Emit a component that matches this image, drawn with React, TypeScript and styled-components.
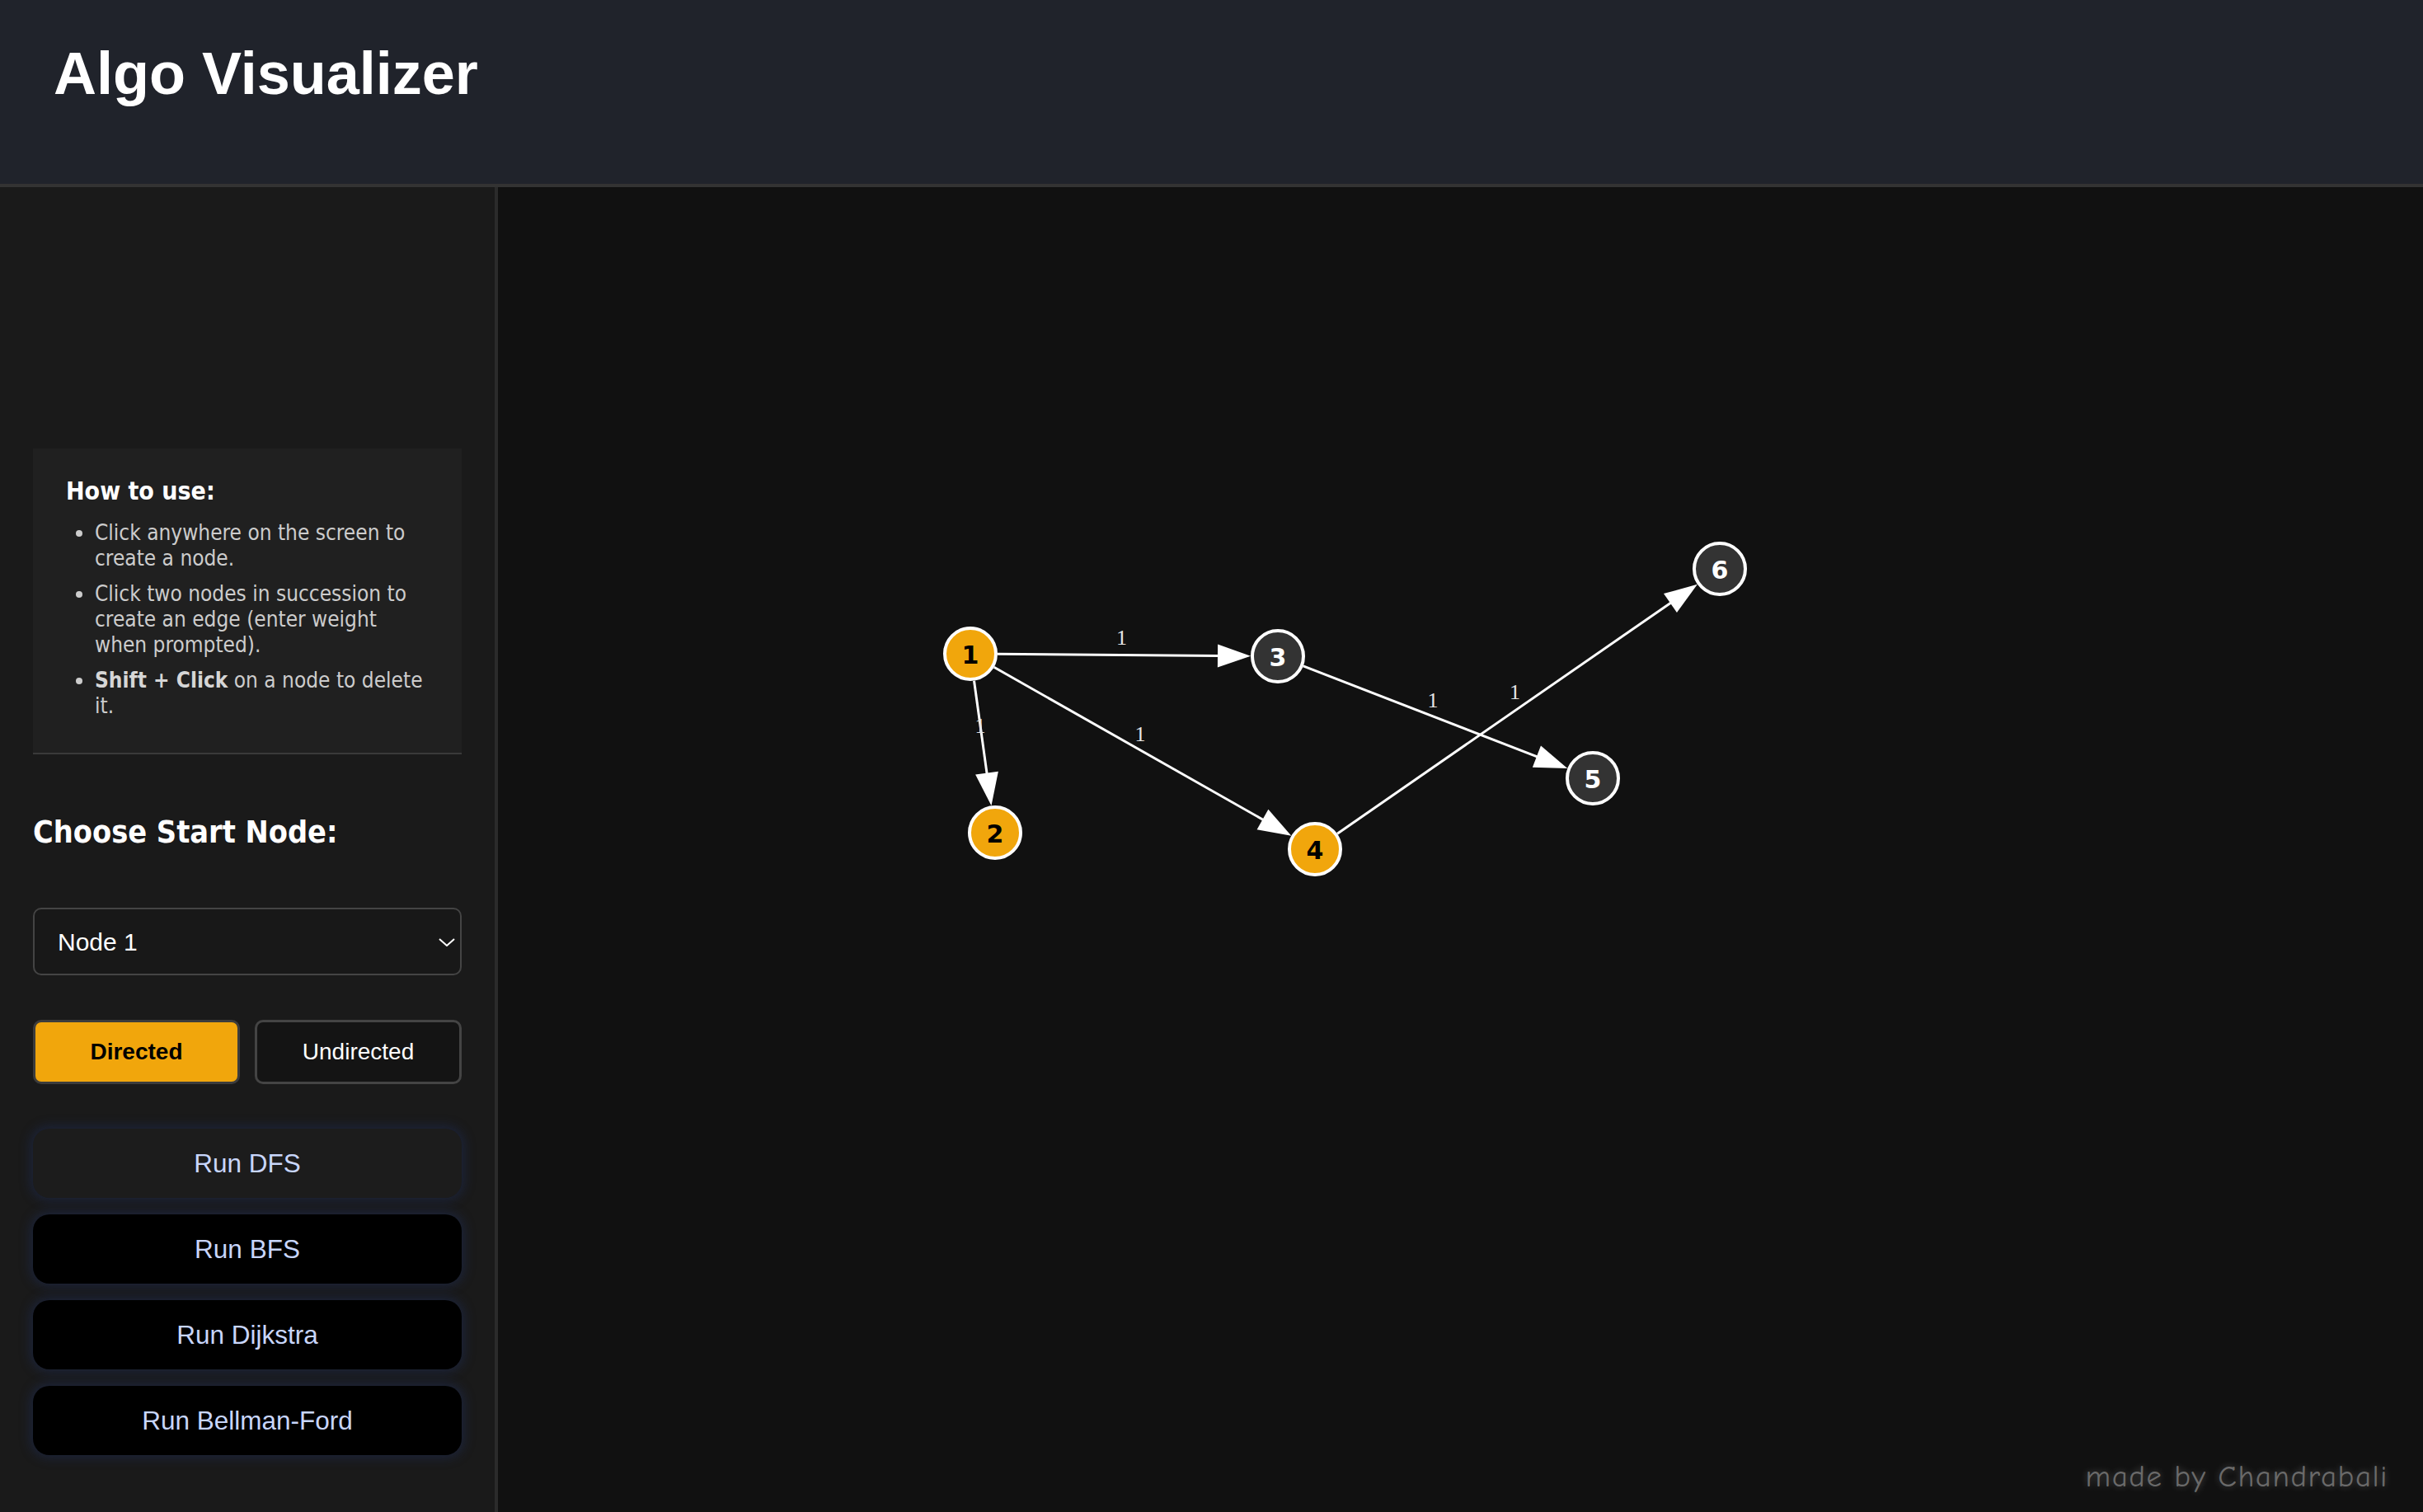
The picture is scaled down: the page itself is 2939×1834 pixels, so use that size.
import React from 'react'
import styled, { createGlobalStyle } from 'styled-components'

const GlobalStyle = createGlobalStyle`
  html, body, #root { margin: 0; padding: 0; height: 100%; }
  body { background: #111111; font-family: 'Liberation Sans', Arial, sans-serif; }
  * { box-sizing: border-box; }
`

const Page = styled.div`
  height: 100vh;
  display: flex;
  flex-direction: column;
  overflow: hidden;
`

const Header = styled.header`
  height: 227px;
  flex-shrink: 0;
  background: #20232b;
  border-bottom: 4px solid #333333;
  padding: 48px 65px 0;
`

const Title = styled.h1`
  margin: 0;
  font-family: 'Liberation Sans', Arial, sans-serif;
  font-size: 72px;
  font-weight: 700;
  color: #ffffff;
`

const Body = styled.div`
  flex: 1;
  display: flex;
  min-height: 0;
`

const Sidebar = styled.aside`
  width: 604px;
  flex-shrink: 0;
  background: #1a1a1a;
  border-right: 4px solid #2b2b2b;
  padding: 317px 40px 0;
  display: flex;
  flex-direction: column;
  font-family: Tahoma, 'DejaVu Sans Condensed', 'Liberation Sans', sans-serif;
`

const HelpBox = styled.div`
  background: #202020;
  border-bottom: 2px solid #3a3a3a;
  padding: 34px 40px 41px;
`

const HelpTitle = styled.h3`
  margin: 0 0 18px;
  font-size: 30px;
  font-weight: 700;
  color: #ffffff;
`

const HelpList = styled.ul`
  margin: 0;
  padding-left: 35px;
  color: #cccccc;
`

const HelpItem = styled.li`
  font-size: 26px;
  line-height: 31px;
  margin-bottom: 12px;
  &:last-child { margin-bottom: 0; }
  b { color: #d6d6d6; }
`

const SectionTitle = styled.h2`
  margin: 72px 0 0;
  font-size: 37.5px;
  font-weight: 700;
  color: #ffffff;
`

const SelectWrap = styled.div`
  position: relative;
  margin-top: 70px;
`

const NodeSelect = styled.select`
  appearance: none;
  width: 100%;
  height: 82px;
  background: #181818;
  border: 2px solid #444444;
  border-radius: 10px;
  color: #ffffff;
  font-family: 'Liberation Sans', Arial, sans-serif;
  font-size: 30px;
  padding: 0 28px;
  outline: none;
`

const Chevron = styled.svg`
  position: absolute;
  right: 8px;
  top: 37px;
  pointer-events: none;
`

const ToggleRow = styled.div`
  display: flex;
  gap: 18px;
  margin-top: 54px;
`

const ToggleButton = styled.button<{ $active?: boolean }>`
  flex: 1;
  height: 78px;
  border: 3px solid ${(p) => (p.$active ? '#3c3c3c' : '#444444')};
  border-radius: 10px;
  background: ${(p) => (p.$active ? '#f1a60c' : '#141414')};
  color: ${(p) => (p.$active ? '#000000' : '#ffffff')};
  font-family: 'Liberation Sans', Arial, sans-serif;
  font-size: 28px;
  font-weight: ${(p) => (p.$active ? 700 : 400)};
`

const RunList = styled.div`
  display: flex;
  flex-direction: column;
  gap: 20px;
  margin-top: 54px;
`

const RunButton = styled.button<{ $hover?: boolean }>`
  height: 84px;
  border: none;
  border-radius: 20px;
  background: ${(p) => (p.$hover ? '#1c1c1c' : '#000000')};
  color: #c8d6fb;
  font-family: 'Liberation Sans', Arial, sans-serif;
  font-size: 31.5px;
  box-shadow: 0 0 14px 3px rgba(32, 48, 100, 0.45);
`

const Canvas = styled.main`
  flex: 1;
  position: relative;
  background: #111111;
`

const GraphSvg = styled.svg`
  display: block;
  width: 100%;
  height: 100%;
`

const Credit = styled.div`
  position: absolute;
  right: 42px;
  bottom: 22px;
  font-family: 'Comic Sans MS', 'Comic Neue', 'DejaVu Sans', sans-serif;
  font-size: 37px;
  letter-spacing: 1.5px;
  color: #6a6a6a;
  text-shadow: 0 0 8px rgba(255, 255, 255, 0.25);
`

type GNode = { id: number; x: number; y: number; visited?: boolean }

const nodes: GNode[] = [
  { id: 1, x: 573, y: 566, visited: true },
  { id: 2, x: 603, y: 783, visited: true },
  { id: 3, x: 946, y: 569 },
  { id: 4, x: 991, y: 803, visited: true },
  { id: 5, x: 1328, y: 717 },
  { id: 6, x: 1482, y: 463 },
]

const edges = [
  [1, 3, 1],
  [1, 2, 1],
  [1, 4, 1],
  [3, 5, 1],
  [4, 6, 1],
]

const R = 31
const OUTER = 33
const HEAD = 40
const HALF = 14

function Edge({ from, to, w }: { from: GNode; to: GNode; w: number }) {
  const dx = to.x - from.x
  const dy = to.y - from.y
  const len = Math.hypot(dx, dy)
  const ux = dx / len
  const uy = dy / len
  const sx = from.x + ux * OUTER
  const sy = from.y + uy * OUTER
  const tx = to.x - ux * OUTER
  const ty = to.y - uy * OUTER
  const bx = tx - ux * HEAD
  const by = ty - uy * HEAD
  const nx = -uy
  const ny = ux
  const head = `${tx},${ty} ${bx + nx * HALF},${by + ny * HALF} ${bx - nx * HALF},${by - ny * HALF}`
  const mx = (from.x + to.x) / 2
  const my = (from.y + to.y) / 2
  return (
    <g>
      <line x1={sx} y1={sy} x2={bx + ux * 2} y2={by + uy * 2} stroke="#ffffff" strokeWidth={3} />
      <polygon points={head} fill="#ffffff" />
      <text
        x={mx - 3}
        y={my - 21}
        textAnchor="middle"
        dominantBaseline="central"
        fontFamily="'Liberation Serif', 'Times New Roman', serif"
        fontSize={26}
        fill="#e6e6e6"
      >
        {w}
      </text>
    </g>
  )
}

export default function App() {
  const byId = (id: number) => nodes.find((n) => n.id === id)!

  return (
    <Page>
      <GlobalStyle />
      <Header>
        <Title>Algo Visualizer</Title>
      </Header>
      <Body>
        <Sidebar>
          <HelpBox>
            <HelpTitle>How to use:</HelpTitle>
            <HelpList>
              <HelpItem>Click anywhere on the screen to create a node.</HelpItem>
              <HelpItem>Click two nodes in succession to create an edge (enter weight when prompted).</HelpItem>
              <HelpItem><b>Shift + Click</b> on a node to delete it.</HelpItem>
            </HelpList>
          </HelpBox>

          <SectionTitle>Choose Start Node:</SectionTitle>

          <SelectWrap>
            <NodeSelect defaultValue="1">
              {nodes.map((n) => (
                <option key={n.id} value={n.id}>Node {n.id}</option>
              ))}
            </NodeSelect>
            <Chevron width="20" height="10" viewBox="0 0 20 10">
              <polyline points="1,1 10,9 19,1" fill="none" stroke="#ffffff" strokeWidth="2" />
            </Chevron>
          </SelectWrap>

          <ToggleRow>
            <ToggleButton $active>Directed</ToggleButton>
            <ToggleButton>Undirected</ToggleButton>
          </ToggleRow>

          <RunList>
            <RunButton $hover>Run DFS</RunButton>
            <RunButton>Run BFS</RunButton>
            <RunButton>Run Dijkstra</RunButton>
            <RunButton>Run Bellman-Ford</RunButton>
          </RunList>
        </Sidebar>

        <Canvas>
          <GraphSvg>
            {edges.map(([a, b, w]) => (
              <Edge key={`${a}-${b}`} from={byId(a)} to={byId(b)} w={w} />
            ))}
            {nodes.map((n) => (
              <g key={n.id}>
                <circle cx={n.x} cy={n.y} r={R} fill={n.visited ? '#f1a60c' : '#333333'} stroke="#ffffff" strokeWidth={4} />
                <text
                  x={n.x}
                  y={n.y + 1}
                  textAnchor="middle"
                  dominantBaseline="central"
                  fontFamily="'DejaVu Sans', Verdana, sans-serif"
                  fontWeight={700}
                  fontSize={30}
                  fill={n.visited ? '#000000' : '#ffffff'}
                >
                  {n.id}
                </text>
              </g>
            ))}
          </GraphSvg>
          <Credit>made by Chandrabali</Credit>
        </Canvas>
      </Body>
    </Page>
  )
}
